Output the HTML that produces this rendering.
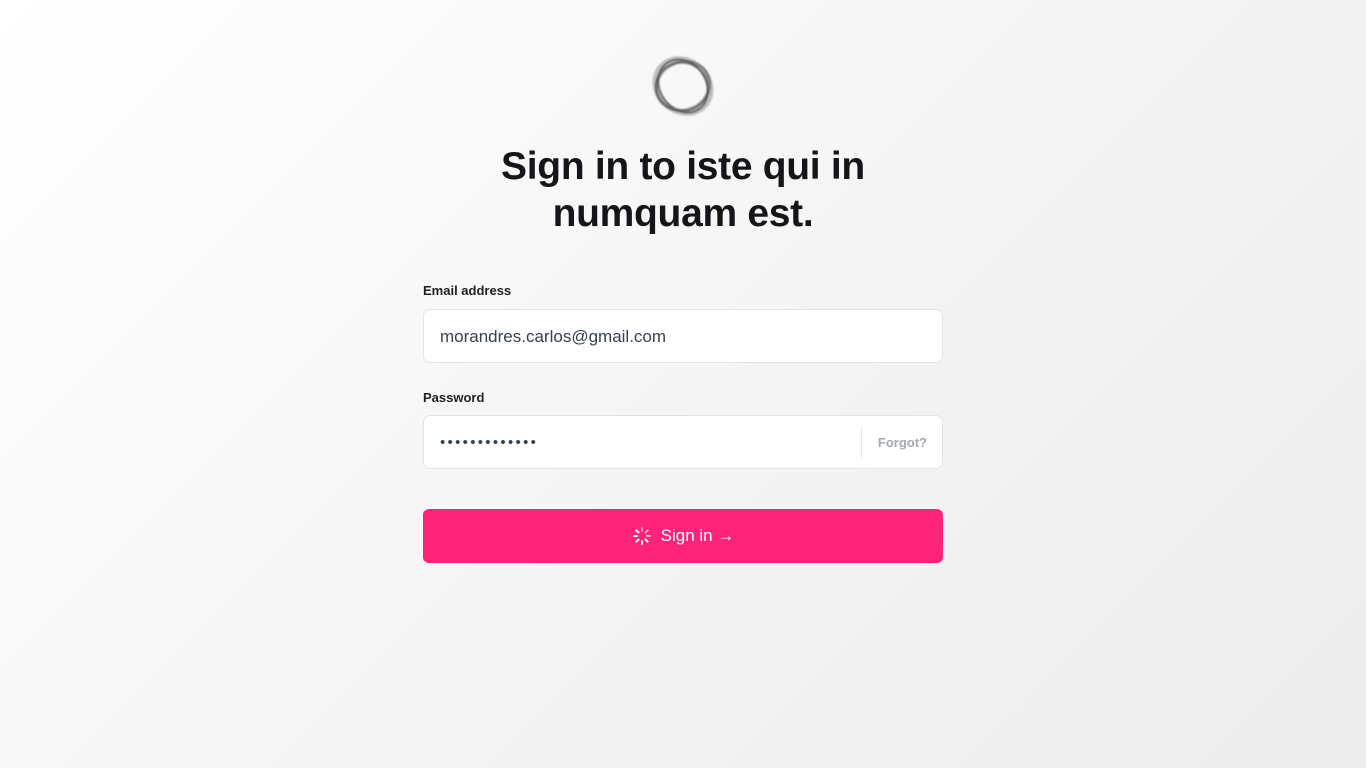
<!DOCTYPE html>
<html><head><meta charset="utf-8"><style>
html,body{margin:0;height:768px;overflow:hidden}
body{background:linear-gradient(135deg,#ffffff 0%,#f4f4f4 55%,#ececec 100%);font-family:"Liberation Sans",sans-serif;position:relative;width:1366px}
.logo{position:absolute;left:648px;top:55px}
h1{position:absolute;left:383px;width:600px;top:143px;margin:0;text-align:center;font-size:39px;line-height:47px;font-weight:bold;color:#16161a;letter-spacing:-0.3px}
.label{position:absolute;left:423px;font-size:13px;color:#1f1f24;font-weight:bold}
.input{position:absolute;left:423px;width:518px;height:52px;background:#fff;border:1px solid #e4e4e7;border-radius:7px;box-sizing:content-box}
.input span{position:absolute;left:16px;top:0;line-height:54px;font-size:17px;color:#374151}
.dots{letter-spacing:2.3px;font-size:15px!important}
.sep{position:absolute;left:437px;top:11px;width:1px;height:31px;background:#e5e7eb}
.forgot{position:absolute;right:15px;top:0;line-height:54px;font-size:13px;font-weight:bold;color:#a3aab8}
.btn{position:absolute;left:423px;top:509px;width:520px;height:54px;background:#ff237a;border-radius:6px;color:#fff;font-size:17px;display:flex;align-items:center;justify-content:center}
</style></head><body>
<svg class="logo" width="70" height="62" viewBox="0 0 70 62">
<defs><filter id="b"><feGaussianBlur stdDeviation="0.8"/></filter></defs>
<g fill="none" filter="url(#b)">
<ellipse cx="35" cy="31" rx="29" ry="25" stroke="#999" stroke-width="6" stroke-opacity=".6" transform="rotate(40 35 31)"/>
<ellipse cx="35" cy="31" rx="27" ry="24" stroke="#666" stroke-width="3" stroke-opacity=".7" transform="rotate(-20 35 31)"/>
<ellipse cx="35" cy="31" rx="28" ry="23" stroke="#444" stroke-width="2" stroke-opacity=".7" transform="rotate(55 35 31)"/>
<ellipse cx="34" cy="32" rx="26" ry="24" stroke="#555" stroke-width="2" stroke-opacity=".6" transform="rotate(10 35 31)"/>
</g></svg>
<h1>Sign in to iste qui in<br>numquam est.</h1>
<div class="label" style="top:283px">Email address</div>
<div class="input" style="top:309px"><span>morandres.carlos@gmail.com</span></div>
<div class="label" style="top:390px">Password</div>
<div class="input" style="top:415px"><span class="dots">•••••••••••••</span><div class="sep"></div><div class="forgot">Forgot?</div></div>
<div class="btn"><svg width="20" height="20" viewBox="0 0 20 20" style="margin-right:9px"><g stroke="#fff" stroke-width="2" stroke-linecap="round">
<line x1="10" y1="2" x2="10" y2="5" opacity=".5"/><line x1="10" y1="15" x2="10" y2="18"/><line x1="2" y1="10" x2="5" y2="10"/><line x1="15" y1="10" x2="18" y2="10" opacity=".7"/>
<line x1="4.3" y1="4.3" x2="6.5" y2="6.5"/><line x1="13.5" y1="13.5" x2="15.7" y2="15.7"/><line x1="4.3" y1="15.7" x2="6.5" y2="13.5"/><line x1="13.5" y1="6.5" x2="15.7" y2="4.3" opacity=".6"/></g></svg>Sign in →</div>
</body></html>
